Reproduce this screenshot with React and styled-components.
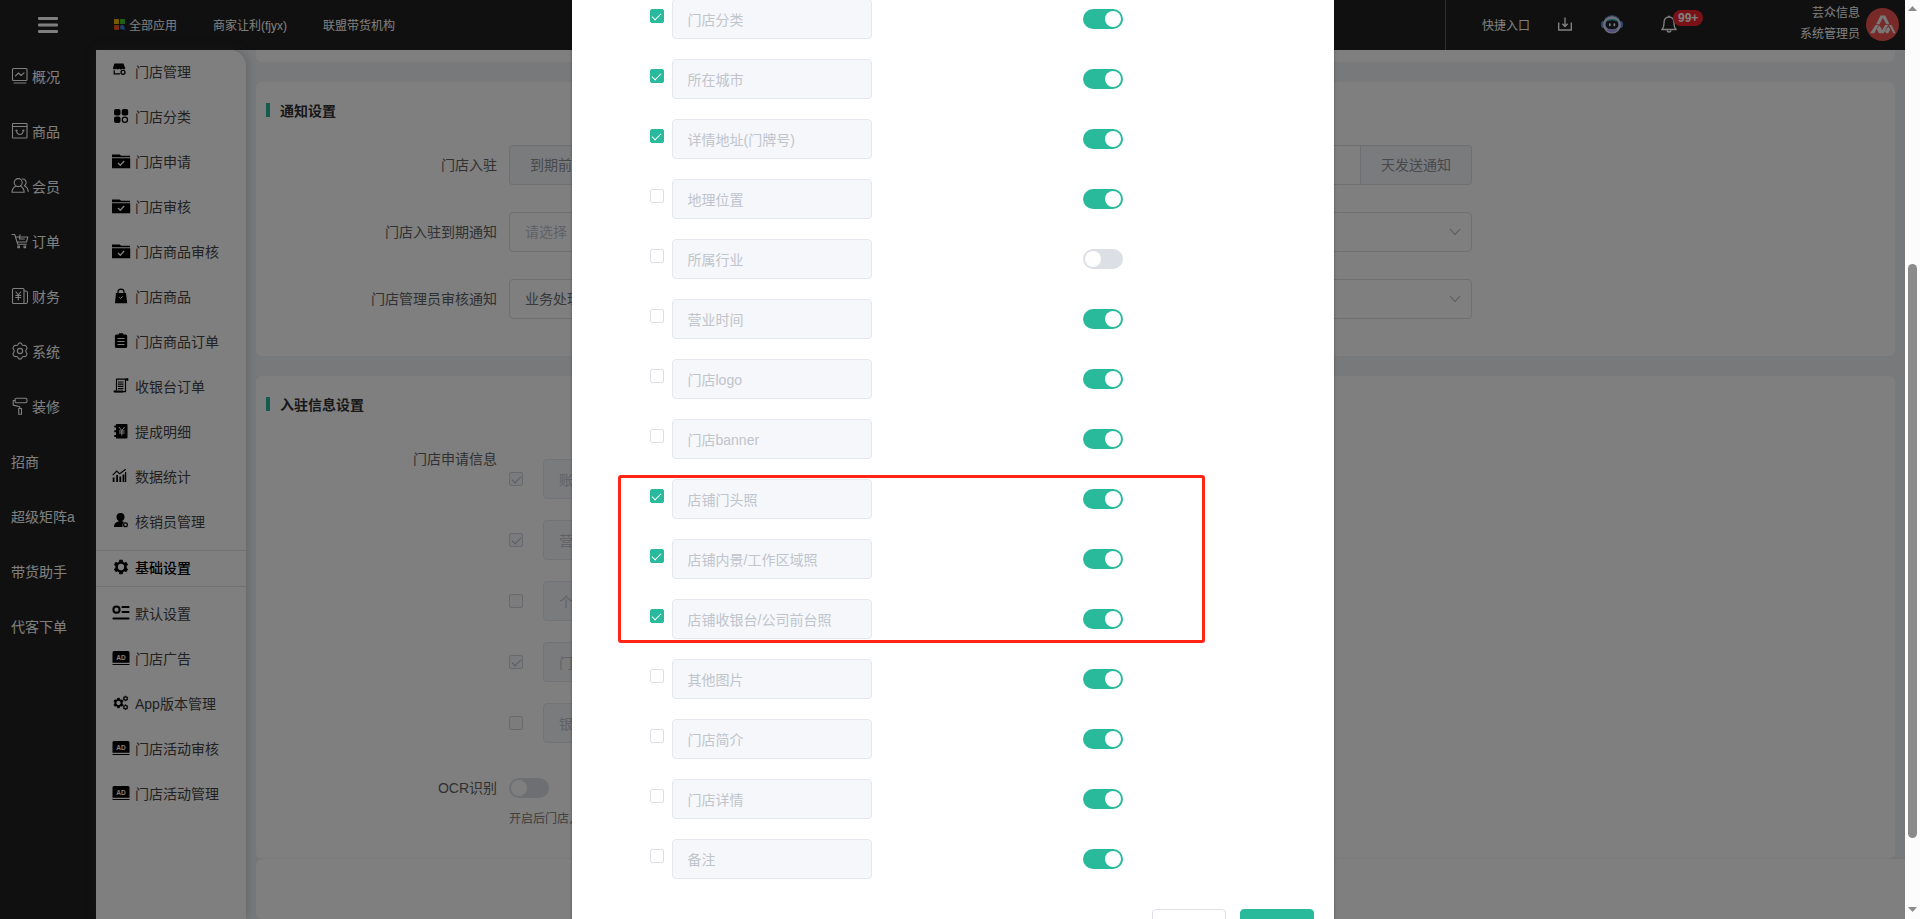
import React from "react";
import styled, { createGlobalStyle, css } from "styled-components";

const GlobalStyle = createGlobalStyle`
  * { box-sizing: border-box; }
  body {
    margin: 0;
    font-family: "Liberation Sans", "Noto Sans CJK SC", sans-serif;
    font-size: 14px;
    color: #303133;
    overflow: hidden;
  }
  button, input, select { font: inherit; }
  a { color: inherit; text-decoration: none; }
`;

const Window = styled.div`
  display: flex;
  height: 100vh;
`;

const Viewport = styled.div`
  position: relative;
  flex: 1;
  min-width: 0;
  display: flex;
  flex-direction: column;
  overflow: hidden;
  background: #f1f3f6;
`;

/* Top bar */

const Header = styled.header`
  flex: none;
  display: flex;
  align-items: stretch;
  height: 50px;
  background: #202020;
  color: #fff;
  font-size: 12px;
`;

const MenuButton = styled.button`
  width: 96px;
  display: grid;
  place-items: center;
  padding: 0;
  border: 0;
  background: none;
  color: #fff;
`;

const TopNav = styled.nav`
  flex: 1;
  display: flex;
  align-items: center;
  gap: 36px;
  padding: 0 0 2px 18px;
`;

const TopLink = styled.a`
  display: flex;
  align-items: center;
  gap: 4px;
  white-space: nowrap;
`;

const Tools = styled.div`
  display: flex;
  align-items: center;
  padding: 0 6px 2px 36px;
  border-left: 1px solid #5c5c5c;
`;

const ToolButton = styled.button`
  position: relative;
  display: grid;
  place-items: center;
  padding: 0;
  margin-left: ${(p) => p.$space}px;
  border: 0;
  background: none;
  color: #fff;
`;

const Badge = styled.span`
  position: absolute;
  left: 12px;
  top: -5px;
  height: 16px;
  padding: 0 5px;
  border-radius: 8px;
  background: #f5222d;
  color: #fff;
  font-size: 12px;
  font-weight: 700;
  line-height: 16px;
`;

const User = styled.div`
  display: flex;
  align-items: center;
  gap: 6px;
  margin-left: 123px;
  line-height: 21px;
  text-align: right;
`;

/* Side menus */

const Body = styled.div`
  flex: 1;
  min-height: 0;
  display: flex;
`;

const MainMenu = styled.nav`
  flex: 0 0 96px;
  background: #202020;
  color: #fff;
`;

const MainLink = styled.a`
  display: flex;
  align-items: center;
  gap: 3px;
  height: 55px;
  padding: 0 0 3px 11px;
  white-space: nowrap;
`;

const SubMenu = styled.nav`
  position: relative;
  flex: 0 0 150px;
  background: #fff;
  border-top-right-radius: 16px;
  box-shadow: 0 0 12px rgba(60, 70, 85, 0.3);
`;

const SubLink = styled.a`
  display: flex;
  align-items: center;
  gap: 4px;
  height: 45px;
  padding: 0 0 3px 15px;
  color: #444;
  white-space: nowrap;
  svg { color: #000; }
  ${(p) =>
    p.$active &&
    css`
      height: 37px;
      margin: 5px 0;
      border: solid #e4e4e4;
      border-width: 1px 0;
      color: #000;
      font-weight: 500;
    `}
`;

/* Page */

const Page = styled.main`
  flex: 1;
  min-width: 0;
  display: flex;
  flex-direction: column;
  padding-left: 10px;
`;

const Card = styled.section`
  flex: ${(p) => (p.$grow ? "1 1 0" : "none")};
  min-height: 0;
  margin: 0 10px 20px 0;
  padding: 17px 24px ${(p) => (p.$grow ? 0 : 36)}px 10px;
  border-radius: 6px;
  background: #fff;
  overflow: hidden;
  ${(p) => p.$grow && css`margin-bottom: 0;`}
`;

const CardTail = styled.div`
  flex: 0 0 12px;
  margin: 0 10px 20px 0;
  border-radius: 0 0 6px 6px;
  background: #fff;
`;

const CardTitle = styled.h2`
  display: flex;
  align-items: center;
  gap: 10px;
  height: 21px;
  margin: 0 0 25px;
  font-size: 14px;
  font-weight: 700;
  color: #303133;
  &::before {
    content: "";
    width: 4px;
    height: 14px;
    background: #29ba9c;
  }
`;

const FormRow = styled.div`
  display: flex;
  margin-bottom: ${(p) => p.$space || 27}px;
`;

const FormLabel = styled.label`
  flex: 0 0 243px;
  padding-right: 12px;
  line-height: ${(p) => (p.$short ? 20 : 40)}px;
  text-align: right;
  color: #606266;
`;

const Control = styled.div`
  position: relative;
  display: flex;
  flex: 0 0 60%;
  min-width: 0;
  height: 40px;
  > svg {
    position: absolute;
    right: 11px;
    top: 14px;
    color: #c0c4cc;
    pointer-events: none;
  }
`;

const Addon = styled.span`
  padding: 0 20px;
  border: 1px solid #dcdfe6;
  border-radius: ${(p) => (p.$end ? "0 4px 4px 0" : "4px 0 0 4px")};
  border-${(p) => (p.$end ? "left" : "right")}: 0;
  background: #f5f7fa;
  color: #909399;
  line-height: 38px;
  white-space: nowrap;
`;

const TextInput = styled.input`
  flex: 1;
  min-width: 0;
  height: 40px;
  padding: 0 15px;
  border: 1px solid #dcdfe6;
  background: #fff;
  color: #606266;
`;

const SelectInput = styled.select`
  width: 100%;
  height: 40px;
  padding: 0 15px;
  appearance: none;
  border: 1px solid #dcdfe6;
  border-radius: 4px;
  background: #fff;
  color: ${(p) => (p.$empty ? "#c0c4cc" : "#707276")};
`;

const NameInput = styled.input`
  width: 200px;
  height: 40px;
  padding: 0 15px 1px;
  border: 1px solid #e4e7ed;
  border-radius: 4px;
  background: #f5f7fa;
  color: #c0c4cc;
`;

const Tick = styled.input.attrs({ type: "checkbox" })`
  appearance: none;
  flex: none;
  display: grid;
  justify-items: center;
  width: 14px;
  height: 14px;
  margin: 0;
  border: 1px solid #dcdfe6;
  border-radius: 2px;
  background: #fff;
  &:disabled { background: #f8f9fb; border-color: #d0d3da; }
  &:checked { background: #29ba9c; border-color: #29ba9c; }
  &:checked:disabled { background: #f2f6fc; border-color: #d0d3da; }
  &:checked::before {
    content: "";
    width: 4px;
    height: 8px;
    margin-top: 1px;
    border: solid #fff;
    border-width: 0 1px 1px 0;
    transform: rotate(45deg);
  }
  &:checked:disabled::before { border-color: #b0b4bc; }
`;

const Toggle = styled.input.attrs({ type: "checkbox", role: "switch" })`
  appearance: none;
  flex: none;
  display: flex;
  width: 40px;
  height: 20px;
  margin: 0;
  padding: 2px;
  border-radius: 10px;
  background: #dcdfe6;
  &::before {
    content: "";
    width: 16px;
    height: 16px;
    border-radius: 50%;
    background: #fff;
  }
  &:checked { background: #29ba9c; justify-content: flex-end; }
`;

const FieldList = styled.div`
  display: flex;
  flex-direction: column;
  gap: 21px;
  padding-top: 20px;
`;

const FieldLine = styled.div`
  display: flex;
  align-items: center;
  gap: 20px;
  height: 40px;
`;

const Hint = styled.p`
  margin: 12px 0 0;
  font-size: 12px;
  line-height: 18px;
  color: #808080;
`;

const ActionBar = styled.footer`
  flex: 0 0 60px;
  border-radius: 6px 0 0 6px;
  background: #fff;
  box-shadow: 0 -1px 2px rgba(0, 0, 0, 0.06);
`;

/* Dialog */

const Mask = styled.div`
  position: absolute;
  inset: 0;
  display: flex;
  justify-content: center;
  align-items: flex-start;
  background: rgba(0, 0, 0, 0.5);
  overflow: hidden;
`;

const Dialog = styled.div`
  width: 40%;
  margin-top: -11px;
  padding: 0 20px 40px 78px;
  background: #fff;
  box-shadow: 0 1px 3px rgba(0, 0, 0, 0.3);
`;

const DialogRow = styled.div`
  display: flex;
  align-items: center;
  gap: 8px;
  height: 60px;
  ${Tick} { margin-bottom: 6px; }
  ${Toggle} { margin-left: 203px; }
`;

const MarkedRows = styled.div`
  position: relative;
  &::after {
    content: "";
    position: absolute;
    top: 6px;
    right: 109px;
    bottom: 6px;
    left: -32px;
    border: 3px solid #ff2414;
    border-radius: 3px;
    pointer-events: none;
  }
`;

const DialogActions = styled.div`
  display: flex;
  justify-content: flex-end;
  gap: 14px;
  padding-top: 20px;
`;

const ActionButton = styled.button`
  width: 74px;
  height: 40px;
  padding: 12px 0 10px;
  border: 1px solid ${(p) => (p.$primary ? "#29ba9c" : "#dcdfe6")};
  border-radius: 4px;
  background: ${(p) => (p.$primary ? "#29ba9c" : "#fff")};
  color: ${(p) => (p.$primary ? "#fff" : "#606266")};
  line-height: 16px;
`;

/* Window scroll bar */

const ScrollTrack = styled.div`
  flex: 0 0 15px;
  display: flex;
  flex-direction: column;
  align-items: center;
  padding: 6px 0 7px;
  background: #fcfcfc;
`;

const ScrollGap = styled.div`
  flex: ${(p) => p.$share} 1 0;
`;

const ScrollThumb = styled.div`
  flex: 574 1 0;
  width: 9px;
  border-radius: 5px;
  background: #8b8b8b;
`;

/* Icons */

const Outline = ({ children, width = 18, height = 18 }) => (
  <svg width={width} height={height} viewBox="0 0 18 18" fill="none" stroke="currentColor" strokeWidth="1.1" strokeLinejoin="round" strokeLinecap="round" aria-hidden="true">
    {children}
  </svg>
);

const Solid = ({ children }) => (
  <svg width="20" height="18" viewBox="0 0 20 18" fill="currentColor" aria-hidden="true">
    {children}
  </svg>
);

const gearPoints = (cx, cy, outer, inner, teeth) => {
  const points = [];
  for (let i = 0; i < teeth; i += 1) {
    [[-0.3, inner], [-0.2, outer], [0.2, outer], [0.3, inner]].forEach(([shift, r]) => {
      const angle = ((i + shift) / teeth) * Math.PI * 2 - Math.PI / 2;
      points.push(`${(cx + r * Math.cos(angle)).toFixed(2)},${(cy + r * Math.sin(angle)).toFixed(2)}`);
    });
  }
  return points.join(" ");
};

const mainIcons = {
  overview: (
    <Outline>
      <rect x="1.5" y="1.5" width="14.5" height="12" rx="1" />
      <path d="M4.5 8.8 7.5 6l2.6 2.5L13 5.8M3 16h12" />
    </Outline>
  ),
  goods: (
    <Outline>
      <rect x="1.5" y="1.5" width="14.5" height="14.5" rx="0.5" />
      <path d="M1.5 4.5H16M5.5 8c-.3 6 7 6 6.8 0M4.8 8.6h1.4M11.6 8.6H13" />
    </Outline>
  ),
  members: (
    <Outline>
      <circle cx="7.2" cy="5.6" r="4" />
      <path d="M5 9c-2.4 1.2-3.9 3.2-4 6.3h12.2c-.1-3-1.5-5-3.8-6.3M11 2c2.900-.2 4.500 1.800 4.100 4.100-.2 1.100-.9 2-1.700 2.600 2.200 1 3.600 2.900 3.800 5.800" />
    </Outline>
  ),
  orders: (
    <Outline>
      <path d="M1 2.500h2.700l3.100 9.800h8.600M5 5h11.800l-1.300 5H6.500M9 2.700 8.500 7h4.900" />
      <rect x="6.800" y="14" width="1.600" height="1.600" />
      <rect x="13" y="14" width="1.600" height="1.600" />
    </Outline>
  ),
  finance: (
    <Outline>
      <rect x="1.500" y="1.500" width="11.500" height="15" rx="1" />
      <path d="M13 4h1.600q1.900 0 1.900 1.800v8.900q0 1.800-1.900 1.800H12M5 5l2.300 3L9.600 5M4.800 8.500h5M4.800 10.500h5M7.300 8v5" />
    </Outline>
  ),
  system: (
    <Outline>
      <path d="M9 .9c1.300 0 1.700.6 2 1.600.4.900 1 1.200 2 1 1.200-.3 2 .1 2.600 1.200.7 1.200.5 1.900-.2 2.600-.9 1-.9 2.400 0 3.400.7.700.9 1.400.2 2.600-.6 1.100-1.400 1.500-2.600 1.200-1-.2-1.600.1-2 1-.3 1-.7 1.600-2 1.600s-1.700-.6-2-1.600c-.4-.9-1-1.200-2-1-1.200.3-2-.1-2.600-1.200-.7-1.200-.5-1.900.2-2.600.9-1 .9-2.400 0-3.400-.7-.7-.9-1.400-.2-2.600.6-1.100 1.400-1.500 2.600-1.200 1 .2 1.600-.1 2-1 .3-1 .7-1.600 2-1.600z" />
      <circle cx="9" cy="9" r="2.600" />
    </Outline>
  ),
  decorate: (
    <Outline>
      <rect x="4" y="1.200" width="12" height="4.600" rx="1.500" />
      <path d="M4 3.500H2.200v4.600l6.600 1.700v1.700" />
      <rect x="7.700" y="11.500" width="2.800" height="5.700" />
    </Outline>
  ),
};

const FolderCheck = () => (
  <Solid>
    <path d="M1 2.500h7.500l1.800 1.300H19V5.300H1zM1 6.200h18.200v10H1z" />
    <path d="m7 11 2.300 2.200L13.200 9" fill="none" stroke="#fff" strokeWidth="1.400" />
  </Solid>
);

const AdBoard = () => (
  <Solid>
    <path d="M3 2h14q1.500 0 1.500 1.500V13.800h-17V3.500Q1.500 2 3 2zM1.500 15h17v1h-17z" />
    <text x="10" y="10.500" textAnchor="middle" fontSize="6.500" fontWeight="700" fill="#fff">AD</text>
  </Solid>
);

const Gear = ({ cx, cy, size }) => (
  <>
    <polygon points={gearPoints(cx, cy, size, size * 0.76, 6)} strokeLinejoin="round" stroke="currentColor" strokeWidth="0.8" />
    <circle cx={cx} cy={cy} r={size * 0.45} fill="#fff" />
  </>
);

const subIcons = {
  store: (
    <Solid>
      <path d="M3.500 1.500h9l1.700 4.700c-.3 1.500-2.200 1.500-2.800.3-.7 1.200-2.300 1.200-3.200 0-.8 1.200-2.500 1.200-3.200 0-.6 1.200-2.700 1.200-3.100-.3zM2.600 8.200h1.200v3H9v1.300H2.600z" />
      <circle cx="12" cy="10.300" r="2" fill="none" stroke="currentColor" strokeWidth="1.300" />
    </Solid>
  ),
  category: (
    <Solid>
      <rect x="3" y="2" width="6.500" height="6.500" rx="2" />
      <rect x="10.700" y="2" width="6.500" height="6.500" rx="2" />
      <rect x="3" y="9.500" width="6.500" height="6.500" rx="2" />
      <circle cx="13.900" cy="12.700" r="2.600" fill="none" stroke="currentColor" strokeWidth="1.300" />
    </Solid>
  ),
  folder: <FolderCheck />,
  bag: (
    <Solid>
      <path d="M5 6h10l1.200 10.200H4z" />
      <path d="M7 6.500V4.600C7.300 1.300 12.700 1.300 13 4.600v1.900" fill="none" stroke="currentColor" strokeWidth="1.200" />
      <path d="m8.200 10.300 1.300 1.300 2.300-2.300" fill="none" stroke="#fff" />
    </Solid>
  ),
  clipboard: (
    <Solid>
      <path d="M5.500 2.500h2l.6-1.300h3.800l.6 1.300h2q1.700 0 1.700 1.500v10.500q0 1.500-1.700 1.500h-9q-1.600 0-1.600-1.500V4q0-1.500 1.600-1.500z" />
      <path d="M6.500 6.500h7M6.500 9.500h7M6.500 12.500h7" stroke="#fff" strokeWidth="1.100" />
    </Solid>
  ),
  receipt: (
    <Solid>
      <path d="M5.200 2.200h11.500v1.500M5.500 2.200v11.500M14.500 3v11.700H4" fill="none" stroke="currentColor" strokeWidth="1.200" />
      <path d="M2.500 13.600h9.600v2H3.500q-1 0-1-2zM14.500 1.600h2.600v2h-2.600z" />
      <path d="M7 5h5.500M7 7.200h5.500M7 9.400h5.500M7 11.600h5.500" stroke="currentColor" strokeWidth="1.200" />
    </Solid>
  ),
  ledger: (
    <Solid>
      <path d="M5 2h10.500q1 0 1 1v12.500q0 1-1 1H5zM3.300 3.500h2.200v2H3.300zM3.300 8.200h2.200v2H3.300zM3.300 12.900h2.200v2H3.300z" />
      <path d="m8 5 2.800 3.600L13.600 5M8 9h5.600M8 11h5.600M10.800 8.600v5" fill="none" stroke="#fff" strokeWidth="1" />
    </Solid>
  ),
  chart: (
    <Solid>
      <path d="M1.700 10.500h1.800V15H1.700zM5.200 8H7v7H5.200zM8.400 9.500h1.800V15H8.400zM11.600 7.500h1.800V15h-1.800zM14 5h1.200v10H14z" />
      <path d="m1.700 8.200 4-4.200 3 2.800 6-4.500" fill="none" stroke="currentColor" strokeWidth="1.100" />
    </Solid>
  ),
  staff: (
    <Solid>
      <circle cx="9.500" cy="5" r="4" />
      <path d="M7.500 8.300h4v1.500h1.700L11.500 12v3H3c0-3.200 1.500-4.700 4.500-5.400z" />
      <circle cx="14.500" cy="12.800" r="1.900" fill="none" stroke="currentColor" strokeWidth="1.300" />
    </Solid>
  ),
  gear: (
    <Solid>
      <Gear cx={10} cy={9} size={7} />
    </Solid>
  ),
  defaults: (
    <Solid>
      <circle cx="5.500" cy="5.700" r="3.100" fill="none" stroke="currentColor" strokeWidth="2" />
      <path d="M11.500 3h6M11.500 8h6M2.500 14.500h15" stroke="currentColor" strokeWidth="2.200" strokeLinecap="round" />
    </Solid>
  ),
  ad: <AdBoard />,
  gears: (
    <Solid>
      <Gear cx={7.5} cy={9} size={4.8} />
      <Gear cx={14.5} cy={4.5} size={2.4} />
      <Gear cx={14.5} cy={13.2} size={2.4} />
    </Solid>
  ),
};

const Chevron = () => (
  <svg width="12" height="12" viewBox="0 0 12 12" fill="none" stroke="currentColor" strokeWidth="1.200" aria-hidden="true">
    <path d="m1 3 5 5.500L11 3" />
  </svg>
);

const Hamburger = () => (
  <svg width="20" height="16" viewBox="0 0 20 16" fill="currentColor" aria-hidden="true">
    <rect width="20" height="3" rx="1" />
    <rect y="6.500" width="20" height="3" rx="1" />
    <rect y="13" width="20" height="3" rx="1" />
  </svg>
);

const AppsMark = () => (
  <svg width="11" height="11" viewBox="0 0 11 11" aria-hidden="true">
    <rect width="5" height="5" rx="0.500" fill="#f5b400" />
    <rect x="6" width="5" height="5" rx="0.500" fill="#3ec12c" />
    <rect y="6" width="5" height="5" rx="0.500" fill="#f0531c" />
    <circle cx="8.200" cy="8.200" r="2.200" fill="#2f86e8" />
    <path d="m9.500 9.500 1.300 1.300" stroke="#2f86e8" strokeWidth="1.300" />
  </svg>
);

const Download = () => (
  <svg width="14" height="14" viewBox="0 0 14 14" fill="none" stroke="currentColor" strokeWidth="1.400" aria-hidden="true">
    <path d="M.7 5.500v7.500h12.600V5.500M7 .5v9M4.300 6.800 7 9.500l2.700-2.700" />
  </svg>
);

const Robot = () => (
  <svg width="22" height="20" viewBox="0 0 22 20" aria-hidden="true">
    <path d="M4 6C5.500.2 16.500.2 18 6" fill="none" stroke="#5d7fc0" strokeWidth="1" />
    <ellipse cx="2" cy="10.500" rx="2" ry="3.500" fill="#5f8de0" />
    <ellipse cx="20" cy="10.500" rx="2" ry="3.500" fill="#5f8de0" />
    <ellipse cx="11" cy="10.800" rx="9" ry="8.800" fill="#d6dcf8" />
    <path d="M5 15c3 4.500 9 4.500 12 0z" fill="#a9a6ee" />
    <rect x="4.500" y="6" width="13" height="9" rx="4.500" fill="#20242e" />
    <path d="M6 6.800C8 5 14 5 16 6.800" fill="none" stroke="#3fcfb4" strokeWidth="1.400" />
    <rect x="8" y="9.300" width="1.700" height="3" rx="0.800" fill="#fff" />
    <rect x="12.500" y="9.300" width="1.700" height="3" rx="0.800" fill="#fff" />
  </svg>
);

const Bell = () => (
  <svg width="16" height="18" viewBox="0 0 16 18" fill="none" stroke="currentColor" strokeWidth="1.300" strokeLinejoin="round" aria-hidden="true">
    <path d="M8 2C4.500 2 3 4.700 3 8c0 4-1 5.500-2.200 6.500h14.400C14 13.500 13 12 13 8c0-3.300-1.500-6-5-6zM7 1.300h2M6 15.500c.4 2 3.600 2 4 0" />
  </svg>
);

const Avatar = () => (
  <svg width="33" height="33" viewBox="0 0 33 33" role="img" aria-label="芸众信息">
    <circle cx="16.500" cy="16.500" r="16.500" fill="#ee5450" />
    <path d="M14.500 7.500h4.700l4.300 8.700h-3.200L16.800 9.800l-3.300 6.400h-3.300z" fill="#f3f3f3" />
    <path d="M9.500 17h3.200L8.200 25.200H4.200zM13.500 17.500l3 4.700-1.600 3h-2L10.800 21zM19 17h3.200l-4.500 8.200h-3zM23 17h2.600l4 8.200h-2.200zM22.500 18.500l1.700 3-2 3.700H20l-1-1.700z" fill="#f3f3f3" />
  </svg>
);

const ScrollArrow = ({ down }) => (
  <svg width="9" height="5" viewBox="0 0 9 5" fill="#8b8b8b" aria-hidden="true">
    <path d={down ? "M0 0h9L4.500 5z" : "M4.500 0 9 5H0z"} />
  </svg>
);

/* Data */

const mainMenu = [
  ["概况", "overview"],
  ["商品", "goods"],
  ["会员", "members"],
  ["订单", "orders"],
  ["财务", "finance"],
  ["系统", "system"],
  ["装修", "decorate"],
  ["招商"],
  ["超级矩阵a"],
  ["带货助手"],
  ["代客下单"],
];

const subMenu = [
  ["门店管理", "store"],
  ["门店分类", "category"],
  ["门店申请", "folder"],
  ["门店审核", "folder"],
  ["门店商品审核", "folder"],
  ["门店商品", "bag"],
  ["门店商品订单", "clipboard"],
  ["收银台订单", "receipt"],
  ["提成明细", "ledger"],
  ["数据统计", "chart"],
  ["核销员管理", "staff"],
  ["基础设置", "gear", true],
  ["默认设置", "defaults"],
  ["门店广告", "ad"],
  ["App版本管理", "gears"],
  ["门店活动审核", "ad"],
  ["门店活动管理", "ad"],
];

const applyFields = [
  ["账号信息", true],
  ["营业执照", true],
  ["个人信息", false],
  ["门店信息", true],
  ["银行信息", false],
];

const dialogFields = [
  ["门店分类", true, true],
  ["所在城市", true, true],
  ["详情地址(门牌号)", true, true],
  ["地理位置", false, true],
  ["所属行业", false, false],
  ["营业时间", false, true],
  ["门店logo", false, true],
  ["门店banner", false, true],
  ["店铺门头照", true, true],
  ["店铺内景/工作区域照", true, true],
  ["店铺收银台/公司前台照", true, true],
  ["其他图片", false, true],
  ["门店简介", false, true],
  ["门店详情", false, true],
  ["备注", false, true],
];

const renderFields = (fields) =>
  fields.map(([name, required, shown]) => (
    <DialogRow key={name}>
      <Tick defaultChecked={required} aria-label={`${name} 必填`} />
      <NameInput defaultValue={name} disabled aria-label={name} />
      <Toggle defaultChecked={shown} aria-label={`${name} 显示`} />
    </DialogRow>
  ));

export default function App() {
  return (
    <>
      <GlobalStyle />
      <Window>
        <Viewport>
          <Header>
            <MenuButton aria-label="菜单">
              <Hamburger />
            </MenuButton>
            <TopNav>
              <TopLink href="#apps">
                <AppsMark />
                全部应用
              </TopLink>
              <TopLink href="#fjyx">商家让利(fjyx)</TopLink>
              <TopLink href="#alliance">联盟带货机构</TopLink>
            </TopNav>
            <Tools>
              <a href="#quick">快捷入口</a>
              <ToolButton $space={28} aria-label="下载">
                <Download />
              </ToolButton>
              <ToolButton $space={29} aria-label="助手">
                <Robot />
              </ToolButton>
              <ToolButton $space={38} aria-label="消息">
                <Bell />
                <Badge>99+</Badge>
              </ToolButton>
              <User>
                <div>
                  芸众信息
                  <br />
                  系统管理员
                </div>
                <Avatar />
              </User>
            </Tools>
          </Header>

          <Body>
            <MainMenu>
              {mainMenu.map(([label, icon]) => (
                <MainLink key={label} href="#menu">
                  {icon && mainIcons[icon]}
                  {label}
                </MainLink>
              ))}
            </MainMenu>
            <SubMenu>
              {subMenu.map(([label, icon, active]) => (
                <SubLink key={label} href="#sub" $active={active}>
                  {subIcons[icon]}
                  {label}
                </SubLink>
              ))}
            </SubMenu>

            <Page>
              <CardTail />
              <Card>
                <CardTitle>通知设置</CardTitle>
                <FormRow>
                  <FormLabel htmlFor="join-days">门店入驻</FormLabel>
                  <Control>
                    <Addon>到期前</Addon>
                    <TextInput id="join-days" />
                    <Addon $end>天发送通知</Addon>
                  </Control>
                </FormRow>
                <FormRow>
                  <FormLabel htmlFor="expire-notice">门店入驻到期通知</FormLabel>
                  <Control>
                    <SelectInput id="expire-notice" $empty>
                      <option>请选择</option>
                    </SelectInput>
                    <Chevron />
                  </Control>
                </FormRow>
                <FormRow $space={1}>
                  <FormLabel htmlFor="audit-notice">门店管理员审核通知</FormLabel>
                  <Control>
                    <SelectInput id="audit-notice">
                      <option>业务处理通知</option>
                    </SelectInput>
                    <Chevron />
                  </Control>
                </FormRow>
              </Card>

              <Card $grow>
                <CardTitle>入驻信息设置</CardTitle>
                <FormRow $space={35}>
                  <FormLabel as="span">门店申请信息</FormLabel>
                  <FieldList>
                    {applyFields.map(([name, checked]) => (
                      <FieldLine key={name}>
                        <Tick defaultChecked={checked} disabled aria-label={`${name} 必填`} />
                        <NameInput defaultValue={name} disabled aria-label={name} />
                      </FieldLine>
                    ))}
                  </FieldList>
                </FormRow>
                <FormRow>
                  <FormLabel htmlFor="ocr" $short>
                    OCR识别
                  </FormLabel>
                  <div>
                    <Toggle id="ocr" />
                    <Hint>开启后门店入驻时可识别证件信息</Hint>
                  </div>
                </FormRow>
              </Card>
              <ActionBar />
            </Page>
          </Body>

          <Mask>
            <Dialog role="dialog" aria-modal="true" aria-label="门店申请信息">
              {renderFields(dialogFields.slice(0, 8))}
              <MarkedRows>{renderFields(dialogFields.slice(8, 11))}</MarkedRows>
              {renderFields(dialogFields.slice(11))}
              <DialogActions>
                <ActionButton>取消</ActionButton>
                <ActionButton $primary>确定</ActionButton>
              </DialogActions>
            </Dialog>
          </Mask>
        </Viewport>

        <ScrollTrack aria-hidden="true">
          <ScrollArrow />
          <ScrollGap $share={253} />
          <ScrollThumb />
          <ScrollGap $share={69} />
          <ScrollArrow down />
        </ScrollTrack>
      </Window>
    </>
  );
}
